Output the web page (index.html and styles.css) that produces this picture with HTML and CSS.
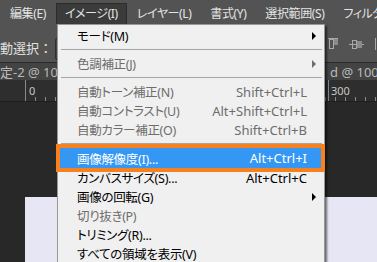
FILE: index.html
```html
<!DOCTYPE html>
<html lang="ja">
<head>
    <meta charset="UTF-8">
    <meta name="viewport" content="width=device-width, initial-scale=1.0">
    <title>イメージメニュー</title>
    <link rel="stylesheet" href="styles.css">
</head>
<body>
    <div class="app">
        <!-- Menu bar -->
        <nav class="menubar">
            <span class="mb-item">編集(E)</span>
            <span class="mb-item open">イメージ(I)</span>
            <span class="mb-item">レイヤー(L)</span>
            <span class="mb-item">書式(Y)</span>
            <span class="mb-item">選択範囲(S)</span>
            <span class="mb-item">フィルタ</span>
        </nav>

        <!-- Options bar -->
        <div class="options">
            <span class="opt-label">動選択 ：</span>
            <span class="opt-field"></span>
            <svg class="align-icons" width="50" height="14" viewBox="0 0 50 14">
                <line x1="1" y1="1.5" x2="11" y2="1.5" stroke="#a8a8a8"/>
                <rect x="2.5" y="2.5" width="4" height="9" fill="none" stroke="#a8a8a8"/>
                <rect x="7" y="2" width="4" height="6" fill="#8a8a8a"/>
                <line x1="22" y1="7.5" x2="37" y2="7.5" stroke="#a8a8a8"/>
                <rect x="25.5" y="3.5" width="4" height="8" fill="none" stroke="#a8a8a8"/>
                <rect x="30" y="4" width="5" height="7" fill="#8a8a8a"/>
                <line x1="48.5" y1="1" x2="48.5" y2="13" stroke="#a8a8a8"/>
            </svg>
        </div>

        <!-- Document tabs -->
        <div class="tabs">
            <span class="tab first">定-2 @ 100%</span>
            <span class="tab second">d @ 100%</span>
        </div>

        <!-- Ruler -->
        <div class="ruler">
            <span class="mark">0</span>
            <span class="mark far">300</span>
        </div>

        <!-- Canvas -->
        <div class="workspace">
            <div class="doc"></div>
        </div>

        <!-- Image menu (open) -->
        <div class="menu">
            <div class="item"><span class="label">モード(M)</span><span></span><span class="arrow"></span></div>
            <div class="sep"></div>
            <div class="item disabled"><span class="label">色調補正(J)</span><span></span><span class="arrow"></span></div>
            <div class="sep"></div>
            <div class="item disabled"><span class="label">自動トーン補正(N)</span><span class="key">Shift+Ctrl+L</span></div>
            <div class="item disabled"><span class="label">自動コントラスト(U)</span><span class="key">Alt+Shift+Ctrl+L</span></div>
            <div class="item disabled"><span class="label">自動カラー補正(O)</span><span class="key">Shift+Ctrl+B</span></div>
            <div class="sep"></div>
            <div class="item active"><span class="label">画像解像度(I)...</span><span class="key">Alt+Ctrl+I</span></div>
            <div class="item"><span class="label">カンバスサイズ(S)...</span><span class="key">Alt+Ctrl+C</span></div>
            <div class="item"><span class="label">画像の回転(G)</span><span></span><span class="arrow"></span></div>
            <div class="item disabled"><span class="label">切り抜き(P)</span></div>
            <div class="item"><span class="label">トリミング(R)...</span></div>
            <div class="item"><span class="label">すべての領域を表示(V)</span></div>
        </div>
    </div>
</body>
</html>
```

FILE: styles.css
```css
/* Global */
body {
    margin: 0;
    background: #282828;
    font-family: "Noto Sans", "Noto Sans CJK JP", sans-serif;
    font-feature-settings: "palt";
    font-size: 13px;
}

.app {
    position: relative;
    width: 377px;
    height: 262px;
    overflow: hidden;
    display: flex;
    flex-direction: column;
}

/* Menu bar */
.menubar {
    height: 24px;
    flex: none;
    background: #535353;
    display: flex;
    align-items: flex-end;
    padding-left: 1px;
    white-space: nowrap;
    font-size: 12px;
    letter-spacing: -0.4px;
}

.mb-item {
    box-sizing: border-box;
    height: 21px;
    line-height: 19px;
    padding: 0 8px;
    margin-right: 1px;
    color: #e4e4e4;
    border: 1px solid transparent;
    border-bottom: none;
}

.mb-item.open {
    background: #3b3b3b;
    border-color: #2c2c2c;
}

/* Options bar */
.options {
    height: 38px;
    flex: none;
    background: #535353;
    border-bottom: 1px solid #2a2a2a;
    display: flex;
    align-items: center;
    white-space: nowrap;
}

.opt-label {
    color: #e0e0e0;
    width: 55px;
    margin-top: 8px;
}

.opt-field {
    width: 40px;
    height: 20px;
    margin-top: 12px;
    border: 1px solid #2e2e2e;
    border-radius: 2px;
    background: #464646;
}

.align-icons {
    margin-left: auto;
    margin-top: 2px;
    flex: none;
}

/* Document tabs */
.tabs {
    height: 17px;
    flex: none;
    background: #434343;
    display: flex;
    white-space: nowrap;
    overflow: hidden;
}

.tab {
    line-height: 18px;
    color: #b9b9b9;
    overflow: hidden;
    flex: none;
}

.tab.first {
    width: 57px;
}

.tab.second {
    margin-left: 273px;
    width: 47px;
}

/* Ruler */
.ruler {
    position: relative;
    height: 21px;
    flex: none;
    background:
        repeating-linear-gradient(90deg, #8a8a8a 0 1px, transparent 1px 10px) 25px 100% / 100% 4px no-repeat,
        linear-gradient(#8a8a8a, #8a8a8a) 25px 0 / 1px 100% no-repeat,
        linear-gradient(#8a8a8a, #8a8a8a) 328px 0 / 1px 100% no-repeat,
        #2e2e2e;
    border-bottom: 1px solid #1e1e1e;
    font-size: 11px;
    color: #c8c8c8;
}

.mark {
    position: absolute;
    left: 29px;
    top: 3px;
}

.mark.far {
    left: 331px;
}

/* Canvas */
.workspace {
    flex: 1;
    background: #282828;
    padding: 95px 0 0 25px;
}

.doc {
    height: 100px;
    background: #e6e6f4;
}

/* Dropdown menu */
.menu {
    position: absolute;
    left: 57px;
    top: 24px;
    box-sizing: border-box;
    width: 268px;
    padding: 1px 2px;
    background: #f0f0f0;
    border: 1px solid #979797;
    box-shadow: 2px 2px 2px rgba(0, 0, 0, 0.55);
    color: #000;
}

.item {
    position: relative;
    height: 19px;
    display: grid;
    grid-template-columns: 1fr auto 15px;
    align-items: center;
    padding-left: 17px;
    white-space: nowrap;
}

.label {
    font-size: 12.5px;
    letter-spacing: -0.3px;
}

.item.disabled {
    color: #6d6d6d;
}

.item.active {
    background: #3597f4;
    color: #fff;
    height: 20px;
}

.item.active::after {
    content: '';
    position: absolute;
    inset: -4px -3px -4px -4px;
    border: 4px solid #f7811e;
}

.key {
    text-align: right;
}

.arrow {
    width: 0;
    height: 0;
    margin-left: 5px;
    border-left: 4px solid #000;
    border-top: 4px solid transparent;
    border-bottom: 4px solid transparent;
}

.item.disabled .arrow {
    border-left-color: #6d6d6d;
}

.sep {
    height: 1px;
    margin: 4px 0 4px 1px;
    background: #a5a5a5;
}
```
